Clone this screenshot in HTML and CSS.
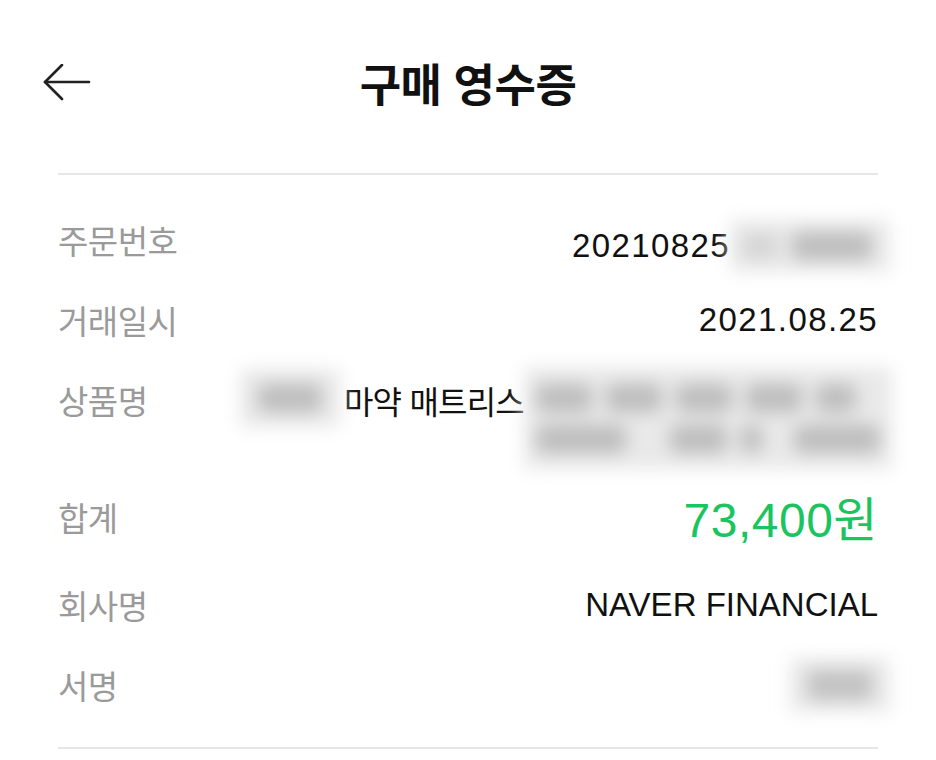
FILE: index.html
```html
<!DOCTYPE html>
<html lang="ko">
<head>
<meta charset="utf-8">
<title>구매 영수증</title>
<link rel="stylesheet" href="styles.css">
</head>
<body>
<div class="page">
  <header class="header">
    <button class="back" aria-label="뒤로">
      <svg width="50" height="40" viewBox="0 0 50 40" fill="none" stroke="#222" stroke-width="2.6" stroke-linecap="round" stroke-linejoin="round">
        <path d="M2 18 H46"/>
        <path d="M19 1 L2 18 L19 35"/>
      </svg>
    </button>
    <h1 class="title">구매 영수증</h1>
    <span class="spacer"></span>
  </header>
  <section class="list">
    <div class="row">
      <span class="label">주문번호</span>
      <span class="value num">20210825<span class="blur blur-order"><i></i><i></i></span></span>
    </div>
    <div class="row">
      <span class="label">거래일시</span>
      <span class="value num">2021.08.25</span>
    </div>
    <div class="row row-product">
      <span class="label">상품명</span>
      <span class="value product">
        <span class="blur blur-brand"><i></i></span>
        <span class="product-name">마약 매트리스</span>
        <span class="blur blur-desc">
          <span class="line"><i></i><i></i><i></i><i></i><i></i></span>
          <span class="line"><i></i><i></i><i></i><i></i></span>
        </span>
      </span>
    </div>
    <div class="row row-total">
      <span class="label">합계</span>
      <span class="value amount">73,400원</span>
    </div>
    <div class="row">
      <span class="label">회사명</span>
      <span class="value">NAVER FINANCIAL</span>
    </div>
    <div class="row">
      <span class="label">서명</span>
      <span class="value"><span class="blur blur-sign"><i></i></span></span>
    </div>
  </section>
</div>
</body>
</html>
```

FILE: styles.css
```css
* { box-sizing: border-box; }
html, body { margin: 0; padding: 0; background: #fff; }
body {
  font-family: "Liberation Sans", "Noto Sans CJK KR", Arial, sans-serif;
  color: #111;
}
.page { width: 936px; }
.header {
  height: 173px;
  display: grid;
  grid-template-columns: 1fr auto 1fr;
  align-items: center;
  padding: 0 43px 8px;
}
.back {
  justify-self: start;
  background: none;
  border: 0;
  padding: 0;
  margin-top: 2px;
  width: 50px;
  height: 40px;
  cursor: pointer;
}
.back svg { display: block; }
.title {
  margin: 0;
  font-family: "Noto Sans CJK KR", sans-serif;
  font-weight: 700;
  font-size: 45px;
  line-height: 52px;
  color: #111;
  letter-spacing: -0.5px;
}
.list {
  margin: 0 58px;
  border-top: 2px solid #e6e6e6;
  border-bottom: 2px solid #e6e6e6;
  padding: 25px 0 22px;
}
.row {
  display: flex;
  justify-content: space-between;
  align-items: flex-start;
  padding: 20px 0;
  height: 80px;
}
.label {
  font-family: "Noto Sans CJK KR", sans-serif;
  font-size: 33px;
  line-height: 40px;
  color: #9a9a9a;
  letter-spacing: -0.5px;
  white-space: nowrap;
}
.value {
  display: flex;
  align-items: center;
  justify-content: flex-end;
  font-size: 33px;
  line-height: 40px;
  color: #111;
  white-space: nowrap;
}
.num { letter-spacing: 1.4px; }
.row-product { height: 121px; }
.product { align-items: flex-start; }
.product-name {
  font-family: "Noto Sans CJK KR", sans-serif;
  font-size: 32px;
  line-height: 40px;
  letter-spacing: -0.8px;
  margin-left: 4px;
  color: #111;
}
.row-total { height: 84px; padding: 16px 0 20px; }
.amount {
  font-size: 48px;
  line-height: 48px;
  color: #1bc45e;
  letter-spacing: 0.5px;
}

/* blurred (masked) content */
.blur {
  display: inline-flex;
  filter: blur(9px);
  background: #e9e9e9;
  border-radius: 4px;
}
.blur i {
  display: block;
  background: #bdbdbd;
  border-radius: 8px;
}
.blur-order {
  width: 160px;
  height: 52px;
  margin-left: 0;
  margin-right: -12px;
  align-items: center;
  padding: 0 12px;
  gap: 14px;
}
.blur-order i:nth-child(1) { width: 36px; height: 24px; background: #d4d4d4; }
.blur-order i:nth-child(2) { width: 80px; height: 28px; }
.blur-brand {
  width: 100px;
  height: 58px;
  margin-top: -11px;
  margin-right: 0;
  align-items: center;
  justify-content: center;
}
.blur-brand i { width: 64px; height: 28px; }
.blur-desc {
  flex-direction: column;
  justify-content: space-around;
  width: 368px;
  height: 102px;
  margin-top: -13px;
  margin-left: 0;
  margin-right: -14px;
  padding: 10px 12px;
}
.blur-desc .line {
  display: flex;
  gap: 14px;
}
.blur-desc .line:nth-child(1) i { width: 56px; height: 28px; }
.blur-desc .line:nth-child(1) i:nth-child(5) { width: 40px; }
.blur-desc .line:nth-child(2) i:nth-child(1) { width: 92px; height: 28px; }
.blur-desc .line:nth-child(2) i:nth-child(2) { width: 58px; height: 28px; margin-left: 30px; }
.blur-desc .line:nth-child(2) i:nth-child(3) { width: 22px; height: 28px; }
.blur-desc .line:nth-child(2) i:nth-child(4) { width: 88px; height: 28px; margin-left: 18px; }
.blur-sign {
  width: 100px;
  height: 54px;
  margin-right: -12px;
  margin-top: -7px;
  align-items: center;
  justify-content: center;
}
.blur-sign i { width: 66px; height: 30px; background: #c2c2c2; }
```
